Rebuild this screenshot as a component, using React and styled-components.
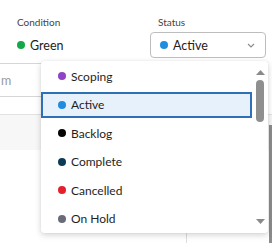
import React, { useState } from 'react';
import styled, { createGlobalStyle } from 'styled-components';

const GlobalStyle = createGlobalStyle`
  html, body {
    margin: 0;
    padding: 0;
    background: #ffffff;
  }
  body {
    font-family: Lato, "Open Sans", sans-serif;
    color: #222;
  }
`;

const Page = styled.div`
  position: relative;
  width: 272px;
  height: 243px;
  overflow: hidden;
  background: #fff;
`;

const Header = styled.div`
  display: grid;
  grid-template-columns: 133px 116px;
  padding: 15px 0 0 17px;
`;

const Field = styled.div`
  display: flex;
  flex-direction: column;
`;

const Label = styled.div`
  font-size: 10px;
  line-height: 14px;
  color: #444;
  padding-left: ${(p) => (p.inset ? '8px' : '0')};
  margin-bottom: 3px;
`;

const Value = styled.div`
  display: flex;
  align-items: center;
  gap: 5px;
  height: 26px;
  font-size: 12.5px;
`;

const Dot = styled.span`
  width: 8px;
  height: 8px;
  border-radius: 50%;
  background: ${(p) => p.color};
  flex-shrink: 0;
`;

const Select = styled.div`
  display: flex;
  align-items: center;
  gap: 5px;
  height: 26px;
  box-sizing: border-box;
  padding: 0 10px 0 9px;
  border: 1px solid #bdbdbd;
  border-radius: 4px;
  font-size: 12.5px;
`;

const Chevron = styled.svg`
  margin-left: auto;
`;

const FilterRow = styled.div`
  margin-top: 5px;
  height: 34px;
  display: flex;
`;

const Input = styled.div`
  width: 200px;
  box-sizing: border-box;
  border: 1px solid #d6d6d6;
  border-left: none;
  display: flex;
  align-items: center;
`;

const Placeholder = styled.span`
  padding-left: 1px;
  font-size: 12.5px;
  color: #9a9a9a;
  white-space: nowrap;
`;

const Toolbar = styled.div`
  margin-top: 17px;
  height: 35px;
  border-top: 1px solid #e2e2e2;
  background: #f7f7f7;
`;

const Panel = styled.div`
  display: grid;
  grid-template-columns: 187px 1fr;
  height: 100px;
`;

const PanelCell = styled.div`
  background: #fff;
  border-right: ${(p) => (p.divided ? '1px solid #dedede' : 'none')};
`;

const PageScroll = styled.div`
  position: absolute;
  right: 0;
  top: 125px;
  width: 3px;
  height: 118px;
  background: #8c8c8c;
`;

const Menu = styled.div`
  position: absolute;
  left: 41px;
  top: 61px;
  width: 227px;
  height: 172px;
  box-sizing: border-box;
  background: #fff;
  border-radius: 3px;
  box-shadow: 0 2px 6px rgba(0, 0, 0, 0.18), 0 0 1px rgba(0, 0, 0, 0.12);
  display: flex;
`;

const List = styled.div`
  flex: 1;
  display: flex;
  flex-direction: column;
  gap: 2.6px;
  padding-top: 2px;
`;

const Item = styled.div`
  display: flex;
  align-items: center;
  gap: 5px;
  height: 26px;
  box-sizing: border-box;
  padding-left: 15px;
  font-size: 12px;
  color: #1e1e1e;
  border: 2px solid ${(p) => (p.active ? '#2f6fb5' : 'transparent')};
  background: ${(p) => (p.active ? '#e6f1fb' : 'transparent')};
`;

const Track = styled.div`
  width: 16px;
  display: flex;
  flex-direction: column;
  align-items: center;
  padding: 9px 0 9px;
  box-sizing: border-box;
`;

const Thumb = styled.div`
  width: 8px;
  height: 42px;
  margin-top: 5px;
  border-radius: 4px;
  background: #8f8f8f;
`;

const Spacer = styled.div`
  flex: 1;
`;

const Arrow = styled.svg`
  display: block;
`;

const statuses = [
  { name: 'Scoping', color: '#8e44c4' },
  { name: 'Active', color: '#1f8ce0' },
  { name: 'Backlog', color: '#050505' },
  { name: 'Complete', color: '#0c3a57' },
  { name: 'Cancelled', color: '#e5202b' },
  { name: 'On Hold', color: '#6a6b78' },
];

export default function App() {
  const [status, setStatus] = useState('Active');
  const current = statuses.find((s) => s.name === status);

  return (
    <Page>
      <GlobalStyle />
      <Header>
        <Field>
          <Label>Condition</Label>
          <Value>
            <Dot color="#14a84a" />
            Green
          </Value>
        </Field>
        <Field>
          <Label inset>Status</Label>
          <Select>
            <Dot color={current.color} />
            {current.name}
            <Chevron width="8" height="5" viewBox="0 0 8 5">
              <path d="M1 1l3 3 3-3" fill="none" stroke="#8a8a8a" strokeWidth="1.1" />
            </Chevron>
          </Select>
        </Field>
      </Header>
      <FilterRow>
        <Input>
          <Placeholder>m</Placeholder>
        </Input>
      </FilterRow>
      <Toolbar />
      <Panel>
        <PanelCell divided />
        <PanelCell />
      </Panel>
      <PageScroll />
      <Menu>
        <List>
          {statuses.map((s) => (
            <Item key={s.name} active={s.name === status} onClick={() => setStatus(s.name)}>
              <Dot color={s.color} />
              {s.name}
            </Item>
          ))}
        </List>
        <Track>
          <Arrow width="9" height="5" viewBox="0 0 9 5">
            <path d="M0 5L4.5 0 9 5z" fill="#8a8a8a" />
          </Arrow>
          <Thumb />
          <Spacer />
          <Arrow width="9" height="5" viewBox="0 0 9 5">
            <path d="M0 0L4.5 5 9 0z" fill="#8a8a8a" />
          </Arrow>
        </Track>
      </Menu>
    </Page>
  );
}
